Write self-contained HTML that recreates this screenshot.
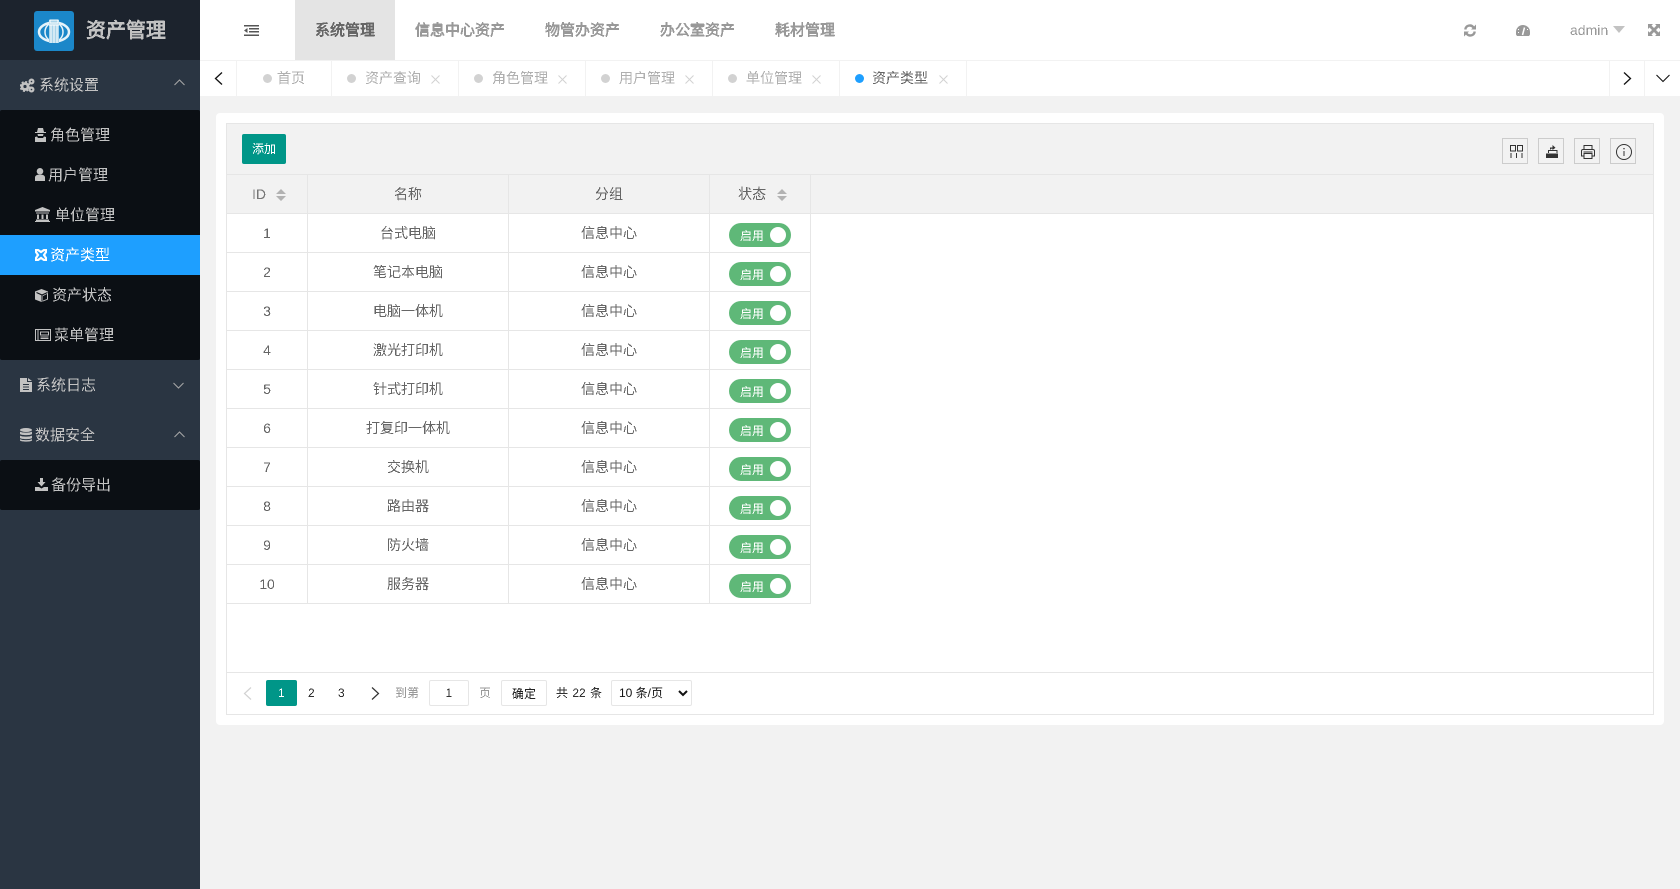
<!DOCTYPE html>
<html lang="zh-CN"><head><meta charset="utf-8"><title>资产管理</title>
<style>
*{box-sizing:border-box}
html,body{margin:0;padding:0;width:1680px;height:889px;overflow:hidden;background:#f2f2f2;font-family:"Liberation Sans","WenQuanYi Zen Hei",sans-serif;font-size:14px;color:#666}
.a{position:absolute;white-space:nowrap}
.t{position:absolute;white-space:nowrap;line-height:20px;height:20px;filter:url(#al)}
svg{position:absolute;display:block}
.m{font-size:15px;color:#c2c2c2}
.h{font-size:15px;color:#999;font-weight:bold}
.tb{position:absolute;top:61px;height:35px;border-right:1px solid #f2f2f2}
.d{position:absolute;width:9px;height:9px;border-radius:50%;background:#d2d2d2;top:74px}
.tt{position:absolute;top:68px;line-height:20px;font-size:14px;color:#b0b0b0;white-space:nowrap;filter:url(#al)}
table{position:absolute;left:227px;top:175px;border-collapse:separate;border-spacing:0;table-layout:fixed;width:484px}
th,td{padding:0;text-align:center;font-weight:normal;font-size:14px;color:#666;border-right:1px solid #e6e6e6;border-bottom:1px solid #e6e6e6;height:39px;position:relative}
th{background:#f2f2f2}
.f{display:inline-block;position:relative;filter:url(#al)}
.sw{position:absolute;left:19px;top:9px;width:62px;height:24px;border-radius:12px;background:#5fb878;color:#fff;font-size:12px;line-height:26px;text-align:left;padding-left:11px}
.sw i{position:absolute;right:5px;top:4px;width:16px;height:16px;border-radius:50%;background:#fff}
.ib{position:absolute;top:138px;width:26px;height:26px;border:1px solid #ccc}
</style></head><body>
<svg width="0" height="0" style="left:0;top:0"><filter id="al" x="-5%" y="-20%" width="110%" height="140%" color-interpolation-filters="sRGB"><feComponentTransfer><feFuncA type="discrete" tableValues="0 1"/></feComponentTransfer></filter></svg>
<!-- sidebar -->
<div class="a" style="left:0;top:0;width:200px;height:889px;background:#2a3542"></div>
<div class="a" style="left:0;top:0;width:200px;height:60px;background:#1c232d"></div>
<div class="a" style="left:0;top:110px;width:200px;height:250px;background:#0b0f14;border-radius:2px"></div>
<div class="a" style="left:0;top:235px;width:200px;height:40px;background:#1e9fff"></div>
<div class="a" style="left:0;top:460px;width:200px;height:50px;background:#0b0f14;border-radius:2px"></div>
<div class="a" style="left:34px;top:11px;width:40px;height:40px;background:#1b87c9;border-radius:3px"></div>
<svg style="left:34px;top:11px" width="40" height="40" viewBox="0 0 40 40"><ellipse cx="20" cy="21" rx="15" ry="9.5" fill="none" stroke="#e6f3fa" stroke-width="2.5"/><ellipse cx="20" cy="21" rx="9" ry="9.5" fill="#1b87c9" stroke="#e6f3fa" stroke-width="1.5"/><rect x="15" y="9" width="10" height="23" fill="#a9d4ea"/><path d="M15 14h10M17 14v18M20 14v18M23 14v18M16 9h8v3h-8z" stroke="#fff" stroke-width="1" fill="none"/></svg>
<div class="t" style="left:86px;top:20px;font-size:20px;line-height:22px;height:22px;color:#c2c2c2;font-weight:bold">资产管理</div>

<svg style="left:20px;top:78px" width="15" height="15" viewBox="0 0 15 15" fill="none" stroke="#c2c2c2"><circle cx="5" cy="8.500" r="3" stroke-width="2.800"/><circle cx="5" cy="8.500" r="4.700" stroke-width="1.600" stroke-dasharray="2 1.700"/><circle cx="11.500" cy="3.500" r="1.900" stroke-width="2.200"/><circle cx="11.500" cy="11.500" r="1.900" stroke-width="2.200"/></svg>
<div class="t m" style="left:39px;top:76px">系统设置</div>
<svg style="left:174px;top:79px" width="11" height="7" viewBox="0 0 11 7"><path d="M.5 6L5.500 1l5 5" fill="none" stroke="#a8a8a8"/></svg>

<svg style="left:35px;top:128px" width="11" height="14" viewBox="0 0 11 14" fill="#c2c2c2"><path d="M3 0h5l1 4h2v1H0V4h2zM2.500 6h6l-.5 2H3zM0 9l2-.5L3 10h5l1-1.500 2 .5v5H0z"/></svg>
<div class="t m" style="left:50px;top:126px">角色管理</div>
<svg style="left:35px;top:168px" width="10" height="13" viewBox="0 0 10 13" fill="#c2c2c2"><circle cx="5" cy="3.300" r="3.300"/><path d="M0 13V9.500C0 8 1.500 7 3 6.800h4C8.500 7 10 8 10 9.500V13z"/></svg>
<div class="t m" style="left:48px;top:166px">用户管理</div>
<svg style="left:35px;top:207px" width="15" height="15" viewBox="0 0 15 15" fill="#c2c2c2"><path d="M7.500 0L15 3v1.500H0V3zM1 5.500h13v1H1zM2 7.500h2v4.500H2zM6.500 7.500h2v4.500h-2zM11 7.500h2v4.500h-2zM1 12.500h13V14H1zM0 14h15v1H0z"/></svg>
<div class="t m" style="left:55px;top:206px">单位管理</div>
<svg style="left:35px;top:249px" width="12" height="12" viewBox="0 0 12 12" fill="none" stroke="#fff" stroke-width="2.200"><path d="M1 1h2l3 2 3-2h2v2L9 6l2 3v2H9L6 9l-3 2H1V9l2-3-2-3z"/></svg>
<div class="t m" style="left:50px;top:246px;color:#fff">资产类型</div>
<svg style="left:35px;top:289px" width="13" height="13" viewBox="0 0 13 13"><path fill="#c2c2c2" d="M6.500 0L13 2.500V10.500L6.500 13 0 10.500V2.500z"/><path d="M7 12.500V6l5.500-2.500M7 6L1.500 3.500" fill="none" stroke="#0b0f14"/><path d="M8 7l4-2v5l-4 1.500z" fill="#0b0f14"/></svg>
<div class="t m" style="left:52px;top:286px">资产状态</div>
<svg style="left:35px;top:329px" width="16" height="12" viewBox="0 0 16 12" fill="none" stroke="#c2c2c2"><path d="M.5.500h15v11H.500zM3 .500v11M5.500 3h8v3h-8zM5.500 8h8M5.500 9.500h8"/></svg>
<div class="t m" style="left:54px;top:326px">菜单管理</div>

<svg style="left:20px;top:378px" width="12" height="14" viewBox="0 0 12 14" fill="#c2c2c2"><path fill-rule="evenodd" d="M0 0h7v4h5v10H0zM8 0l4 3H8zM3 6v1h6V6zM3 8.500v1h6v-1zM3 11v1h6v-1z"/></svg>
<div class="t m" style="left:36px;top:376px">系统日志</div>
<svg style="left:173px;top:382px" width="11" height="7" viewBox="0 0 11 7"><path d="M.5 1l5 5 5-5" fill="none" stroke="#a8a8a8"/></svg>
<svg style="left:20px;top:428px" width="12" height="14" viewBox="0 0 12 14" fill="#c2c2c2"><ellipse cx="6" cy="2" rx="6" ry="2"/><path d="M0 3.500C1 5 11 5 12 3.500V6C11 7.500 1 7.500 0 6zM0 7.500C1 9 11 9 12 7.500V10C11 11.500 1 11.500 0 10zM0 11C1 12.500 11 12.500 12 11v1.500C11 14 1 14 0 12.500z"/></svg>
<div class="t m" style="left:35px;top:426px">数据安全</div>
<svg style="left:174px;top:431px" width="11" height="7" viewBox="0 0 11 7"><path d="M.5 6L5.500 1l5 5" fill="none" stroke="#a8a8a8"/></svg>
<svg style="left:35px;top:478px" width="13" height="13" viewBox="0 0 13 13" fill="#c2c2c2"><path d="M5 0h3v4h2.500L6.500 8.500 2.500 4H5zM0 9h4l2.500 1.500L9 9h4v4H0z"/></svg>
<div class="t m" style="left:51px;top:476px">备份导出</div>

<!-- header -->
<div class="a" style="left:200px;top:0;width:1480px;height:60px;background:#fff"></div>
<svg style="left:244px;top:25px" width="15" height="11" viewBox="0 0 15 11" fill="#555"><path d="M0 0h15v1.500H0zM5 3h10v1.500H5zM5 6h10v1.500H5zM0 9.500h15V11H0zM3.500 3v5L0 5.500z"/></svg>
<div class="a" style="left:295px;top:0;width:100px;height:60px;background:#e4e4e4"></div>
<div class="t h" style="left:315px;top:21px;color:#666">系统管理</div>
<div class="t h" style="left:415px;top:21px">信息中心资产</div>
<div class="t h" style="left:545px;top:21px">物管办资产</div>
<div class="t h" style="left:660px;top:21px">办公室资产</div>
<div class="t h" style="left:775px;top:21px">耗材管理</div>
<svg style="left:1464px;top:24px" width="12" height="13" viewBox="0 0 12 13" fill="none" stroke="#999" stroke-width="2.400"><path d="M1.300 5.500A4.500 4.500 0 0 1 9.500 3.500M10.700 7.500A4.500 4.500 0 0 1 2.500 9.500"/><path d="M12 .5v5H7zM0 12.500v-5h5z" fill="#999" stroke="none"/></svg>
<svg style="left:1516px;top:25px" width="14" height="11" viewBox="0 0 14 11"><path fill="#999" d="M7 0a7 7 0 0 1 7 7v2.500L13 11H1L0 9.500V7a7 7 0 0 1 7-7z"/><path d="M6.500 10L8.500 2.500" stroke="#fff" stroke-width="1.500"/><path d="M2.500 4v1M11.500 4v1M2 7.500h1" stroke="#fff" stroke-width="1"/></svg>
<div class="t" style="left:1570px;top:20px;color:#999;font-size:14px">admin</div>
<svg style="left:1613px;top:26px" width="12" height="7" viewBox="0 0 12 7"><path fill="#c2c2c2" d="M0 0h12L6 7z"/></svg>
<svg style="left:1648px;top:24px" width="12" height="12" viewBox="0 0 12 12" fill="#999"><path d="M0 0h5L3.500 1.500 6 4 8.500 1.500 7 0h5v5l-1.500-1.500L8 6l2.500 2.500L12 7v5H7l1.500-1.500L6 8l-2.500 2.500L5 12H0V7l1.500 1.500L4 6 1.500 3.500 0 5z"/></svg>

<!-- tabs -->
<div class="a" style="left:200px;top:60px;width:1480px;height:36px;background:#fff;border-top:1px solid #f2f2f2"></div>
<div class="tb" style="left:200px;width:37px"></div>
<div class="tb" style="left:237px;width:95px"></div>
<div class="tb" style="left:332px;width:127px"></div>
<div class="tb" style="left:459px;width:127px"></div>
<div class="tb" style="left:586px;width:127px"></div>
<div class="tb" style="left:713px;width:127px"></div>
<div class="tb" style="left:840px;width:127px"></div>
<div class="a" style="left:1609px;top:61px;width:1px;height:35px;background:#f2f2f2"></div>
<div class="a" style="left:1644px;top:61px;width:1px;height:35px;background:#f2f2f2"></div>
<svg style="left:214px;top:72px" width="9" height="13" viewBox="0 0 9 13"><path d="M8 .5L1.500 6.500 8 12.500" fill="none" stroke="#111" stroke-width="1.300"/></svg>
<svg style="left:1623px;top:72px" width="9" height="13" viewBox="0 0 9 13"><path d="M1 .5L7.500 6.500 1 12.500" fill="none" stroke="#111" stroke-width="1.300"/></svg>
<svg style="left:1656px;top:74px" width="14" height="9" viewBox="0 0 14 9"><path d="M.5 1l6.500 6.500L13.500 1" fill="none" stroke="#111" stroke-width="1.100"/></svg>
<div class="d" style="left:263px"></div><div class="tt" style="left:277px">首页</div>
<div class="d" style="left:347px"></div><div class="tt" style="left:365px">资产查询</div>
<svg style="left:431px;top:75px" width="9" height="9" viewBox="0 0 9 9"><path d="M.5.500l8 8M8.500.500l-8 8" stroke="#d2d2d2"/></svg>
<div class="d" style="left:474px"></div><div class="tt" style="left:492px">角色管理</div>
<svg style="left:558px;top:75px" width="9" height="9" viewBox="0 0 9 9"><path d="M.5.500l8 8M8.500.500l-8 8" stroke="#d2d2d2"/></svg>
<div class="d" style="left:601px"></div><div class="tt" style="left:619px">用户管理</div>
<svg style="left:685px;top:75px" width="9" height="9" viewBox="0 0 9 9"><path d="M.5.500l8 8M8.500.500l-8 8" stroke="#d2d2d2"/></svg>
<div class="d" style="left:728px"></div><div class="tt" style="left:746px">单位管理</div>
<svg style="left:812px;top:75px" width="9" height="9" viewBox="0 0 9 9"><path d="M.5.500l8 8M8.500.500l-8 8" stroke="#d2d2d2"/></svg>
<div class="d" style="left:855px;background:#1e9fff"></div><div class="tt" style="left:872px;color:#666">资产类型</div>
<svg style="left:939px;top:75px" width="9" height="9" viewBox="0 0 9 9"><path d="M.5.500l8 8M8.500.500l-8 8" stroke="#d2d2d2"/></svg>

<!-- card -->
<div class="a" style="left:216px;top:113px;width:1448px;height:612px;background:#fff;border-radius:4px"></div>
<div class="a" style="left:226px;top:123px;width:1428px;height:592px;border:1px solid #e6e6e6"></div>
<div class="a" style="left:227px;top:124px;width:1426px;height:51px;background:#f2f2f2;border-bottom:1px solid #e6e6e6"></div>
<div class="a" style="left:227px;top:175px;width:1426px;height:39px;background:#f2f2f2;border-bottom:1px solid #e6e6e6"></div>
<div class="a" style="left:242px;top:134px;width:44px;height:30px;background:#009688;color:#fff;border-radius:2px;font-size:12px;line-height:30px;text-align:center"><span class="f">添加</span></div>
<div class="ib" style="left:1502px"></div><div class="ib" style="left:1538px"></div><div class="ib" style="left:1574px"></div><div class="ib" style="left:1610px"></div>
<svg style="left:1510px;top:145px" width="13" height="13" viewBox="0 0 13 13" fill="none" stroke="#333"><path d="M.5.500h5v5.500h-5zM7.500.500h5v5.500h-5zM1 8v5M6.500 8v5M12 8v5"/></svg>
<svg style="left:1546px;top:145px" width="12" height="13" viewBox="0 0 12 13" fill="#333"><path d="M0 8.500h12V13H0zM2 5h9.500v3h-1V6H3v2H2zM4 4.500V2.500h2.500V0L9.500 2.700 6.500 5V3.700H5V4.500z"/></svg>
<svg style="left:1581px;top:145px" width="14" height="14" viewBox="0 0 14 14" fill="none" stroke="#333"><path d="M3 4.500V.5h8v4M3 11H.5V6Q.5 4.500 2 4.500h10Q13.500 4.500 13.500 6v5H11M3 8.500h8v5H3z"/><path d="M2.500 6.500h9v1h-9z" fill="#333" stroke="none"/></svg>
<svg style="left:1616px;top:144px" width="16" height="16" viewBox="0 0 16 16" fill="none" stroke="#333"><circle cx="8" cy="8" r="7.500"/><path d="M8 7v5"/><path d="M8 4v1.300" stroke-width="1.300"/></svg>

<table>
<colgroup><col style="width:81px"><col style="width:201px"><col style="width:201px"><col style="width:101px"></colgroup>
<tr><th><span class="f" style="left:-8px;color:#777">ID</span><svg style="left:49px;top:14px" width="10" height="12" viewBox="0 0 10 12" fill="#b2b2b2"><path d="M0 5L5 0l5 5zM0 7h10l-5 5z"/></svg></th><th><span class="f">名称</span></th><th><span class="f">分组</span></th><th><span class="f" style="left:-8px">状态</span><svg style="left:67px;top:14px" width="10" height="12" viewBox="0 0 10 12" fill="#b2b2b2"><path d="M0 5L5 0l5 5zM0 7h10l-5 5z"/></svg></th></tr>
<tr><td><span class="f">1</span></td><td><span class="f">台式电脑</span></td><td><span class="f">信息中心</span></td><td><div class="sw"><span class="f">启用</span><i></i></div></td></tr>
<tr><td><span class="f">2</span></td><td><span class="f">笔记本电脑</span></td><td><span class="f">信息中心</span></td><td><div class="sw"><span class="f">启用</span><i></i></div></td></tr>
<tr><td><span class="f">3</span></td><td><span class="f">电脑一体机</span></td><td><span class="f">信息中心</span></td><td><div class="sw"><span class="f">启用</span><i></i></div></td></tr>
<tr><td><span class="f">4</span></td><td><span class="f">激光打印机</span></td><td><span class="f">信息中心</span></td><td><div class="sw"><span class="f">启用</span><i></i></div></td></tr>
<tr><td><span class="f">5</span></td><td><span class="f">针式打印机</span></td><td><span class="f">信息中心</span></td><td><div class="sw"><span class="f">启用</span><i></i></div></td></tr>
<tr><td><span class="f">6</span></td><td><span class="f">打复印一体机</span></td><td><span class="f">信息中心</span></td><td><div class="sw"><span class="f">启用</span><i></i></div></td></tr>
<tr><td><span class="f">7</span></td><td><span class="f">交换机</span></td><td><span class="f">信息中心</span></td><td><div class="sw"><span class="f">启用</span><i></i></div></td></tr>
<tr><td><span class="f">8</span></td><td><span class="f">路由器</span></td><td><span class="f">信息中心</span></td><td><div class="sw"><span class="f">启用</span><i></i></div></td></tr>
<tr><td><span class="f">9</span></td><td><span class="f">防火墙</span></td><td><span class="f">信息中心</span></td><td><div class="sw"><span class="f">启用</span><i></i></div></td></tr>
<tr><td><span class="f">10</span></td><td><span class="f">服务器</span></td><td><span class="f">信息中心</span></td><td><div class="sw"><span class="f">启用</span><i></i></div></td></tr>
</table>

<!-- pagination -->
<div class="a" style="left:227px;top:672px;width:1426px;height:1px;background:#e6e6e6"></div>
<svg style="left:243px;top:687px" width="9" height="13" viewBox="0 0 9 13"><path d="M8 .5L1.500 6.500 8 12.500" fill="none" stroke="#d2d2d2" stroke-width="1.200"/></svg>
<div class="a" style="left:266px;top:680px;width:31px;height:26px;background:#009688;color:#fff;border-radius:2px;font-size:12px;line-height:26px;text-align:center"><span class="f">1</span></div>
<div class="t" style="left:308px;top:683px;font-size:12px;color:#333">2</div>
<div class="t" style="left:338px;top:683px;font-size:12px;color:#333">3</div>
<svg style="left:371px;top:687px" width="9" height="13" viewBox="0 0 9 13"><path d="M1 .5L7.500 6.500 1 12.500" fill="none" stroke="#333" stroke-width="1.200"/></svg>
<div class="t" style="left:395px;top:683px;font-size:12px;color:#999">到第</div>
<div class="a" style="left:429px;top:680px;width:40px;height:26px;background:#fff;border:1px solid #e6e6e6;border-radius:2px;font-size:12px;color:#333;line-height:24px;text-align:center"><span class="f">1</span></div>
<div class="t" style="left:479px;top:683px;font-size:12px;color:#999">页</div>
<div class="a" style="left:501px;top:680px;width:46px;height:26px;background:#fff;border:1px solid #e6e6e6;border-radius:2px;font-size:12px;color:#222;line-height:26px;text-align:center"><span class="f">确定</span></div>
<div class="t" style="left:556px;top:683px;font-size:12px;color:#333;word-spacing:1px">共 22 条</div>
<select style="position:absolute;left:611px;top:680px;width:81px;height:26px;border:1px solid #e6e6e6;border-radius:2px;background:#fff;font-family:inherit;font-size:12px;color:#111;padding:0 0 0 3px;outline:0"><option>10 条/页</option></select>
</body></html>
